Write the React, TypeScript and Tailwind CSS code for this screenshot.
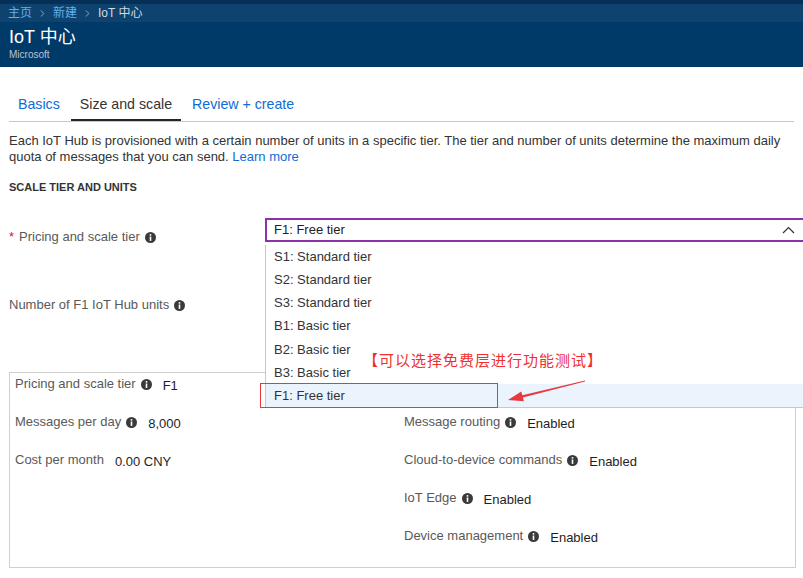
import { ChevronRight } from "lucide-react";

const font = "font-['Liberation_Sans','Noto_Sans_CJK_SC',sans-serif]";

function Info() {
  return (
    <svg width="11" height="11" viewBox="0 0 11 11" className="inline-block shrink-0">
      <circle cx="5.5" cy="5.5" r="5.5" fill="#3a3a3a" />
      <rect x="4.7" y="2.1" width="1.6" height="1.6" fill="#fff" />
      <rect x="4.7" y="4.5" width="1.6" height="4.4" fill="#fff" />
    </svg>
  );
}

const tiers = [
  "S1: Standard tier",
  "S2: Standard tier",
  "S3: Standard tier",
  "B1: Basic tier",
  "B2: Basic tier",
  "B3: Basic tier",
  "F1: Free tier",
];

function Stat({ label, value, info = true }: { label: string; value: string; info?: boolean }) {
  return (
    <div className="flex h-[38px] items-start">
      <span className="flex items-center gap-[5px] leading-[16px] text-[#595959]">
        {label}
        {info && <Info />}
      </span>
      <span className="ml-[11px] mt-[2px] leading-[16px] text-[#1e1e1e]">{value}</span>
    </div>
  );
}

export default function App() {
  return (
    <div className={`relative h-[578px] w-[803px] overflow-hidden bg-white text-[13px] ${font}`}>
      {/* header */}
      <div className="h-[67px] bg-[#003a68]">
        <div className="h-[4px] bg-[#052f57]" />
        <div className="flex h-[18px] items-center gap-[5px] bg-[#0f436f] px-[8px] text-[12px]">
          <span className="text-[#5fb0f0]">主页</span>
          <ChevronRight className="h-[11px] w-[11px] text-[#c6d2de]" strokeWidth={1.5} />
          <span className="text-[#5fb0f0]">新建</span>
          <ChevronRight className="h-[11px] w-[11px] text-[#c6d2de]" strokeWidth={1.5} />
          <span className="text-[#d0dae4]">IoT 中心</span>
        </div>
        <div className="px-[9px] pt-[3px]">
          <div className="text-[18px] leading-[24px] text-white">IoT 中心</div>
          <div className="text-[10px] leading-[12px] text-[#b7c5d4]">Microsoft</div>
        </div>
      </div>

      <div className="px-[9px]">
        {/* tabs */}
        <div className="mt-[27px] flex gap-[2px] border-b border-[#c8c8c8] text-[14.2px] leading-[20px]">
          <div className="border-b-2 border-transparent px-[9px] pb-[5px] text-[#0f6cd4]">Basics</div>
          <div className="border-b-2 border-[#252525] px-[9px] pb-[5px] text-[#333]">Size and scale</div>
          <div className="border-b-2 border-transparent px-[9px] pb-[5px] text-[#0f6cd4]">Review + create</div>
        </div>

        <p className="mt-[11px] leading-[16px] text-[#333]">
          Each IoT Hub is provisioned with a certain number of units in a specific tier. The tier and number of units determine the maximum daily
          <br />
          quota of messages that you can send. <span className="text-[#0f6cd4]">Learn more</span>
        </p>

        <div className="mt-[15px] text-[11px] font-bold leading-[14px] text-[#333]">SCALE TIER AND UNITS</div>

        {/* pricing tier row */}
        <div className="mt-[24px] flex">
          <div className="flex w-[256px] shrink-0 items-center gap-[5px] pt-[11px] leading-[16px] text-[#595959]">
            <span className="text-[#e81123]">*</span>
            <span>Pricing and scale tier</span>
            <Info />
          </div>
          <div className="relative z-10 w-[545px] shrink-0">
            <div className="flex h-[24px] items-center justify-between border-2 border-[#8a32a8] bg-white pl-[7px] pr-[13px] text-[#222]">
              <span>F1: Free tier</span>
              <svg width="13" height="8" viewBox="0 0 13 8">
                <path d="M1 7 L6.5 1.5 L12 7" fill="none" stroke="#333" strokeWidth="1.2" />
              </svg>
            </div>
            <div className="absolute left-0 top-full w-full border-b border-l border-[#c8c8c8] bg-white">
              {tiers.map((t, i) => (
                <div
                  key={i}
                  className={`flex h-[23.2px] items-center pl-[8px] text-[#333] ${i === tiers.length - 1 ? "bg-[#ebf4fd]" : ""}`}
                >
                  {t}
                </div>
              ))}
            </div>
          </div>
        </div>

        {/* units row */}
        <div className="mt-[52px] flex items-center gap-[5px] leading-[16px] text-[#595959]">
          <span>Number of F1 IoT Hub units</span>
          <Info />
        </div>

        {/* summary */}
        <div className="mt-[59px] grid h-[196px] w-[787px] grid-cols-[389px_1fr] border border-[#cfcfcf] pl-[5px] pt-[3px]">
          <div>
            <Stat label="Pricing and scale tier" value="F1" />
            <Stat label="Messages per day" value="8,000" />
            <Stat label="Cost per month" value="0.00 CNY" info={false} />
          </div>
          <div>
            <Stat label="Device-to-cloud partitions" value="2" />
            <Stat label="Message routing" value="Enabled" />
            <Stat label="Cloud-to-device commands" value="Enabled" />
            <Stat label="IoT Edge" value="Enabled" />
            <Stat label="Device management" value="Enabled" />
          </div>
        </div>
      </div>

      {/* annotation */}
      <div className="absolute left-[363px] top-[350px] z-20 font-['Noto_Sans_CJK_SC',sans-serif] text-[15px] leading-[20px] tracking-[1px] text-[#f03030]">
        【可以选择免费层进行功能测试】
      </div>
      <div className="absolute left-[260px] top-[383px] z-20 h-[25px] w-[238px] border-[1.5px] border-[#e8383d]" />
      <svg className="pointer-events-none absolute left-0 top-0 z-20" width="803" height="578">
        <polygon
          points="585,380.6 522.3,395.2 521.3,391.6 508,400 523.9,401.2 522.9,397.6 585,381.6"
          fill="#e8383d"
        />
      </svg>
    </div>
  );
}
